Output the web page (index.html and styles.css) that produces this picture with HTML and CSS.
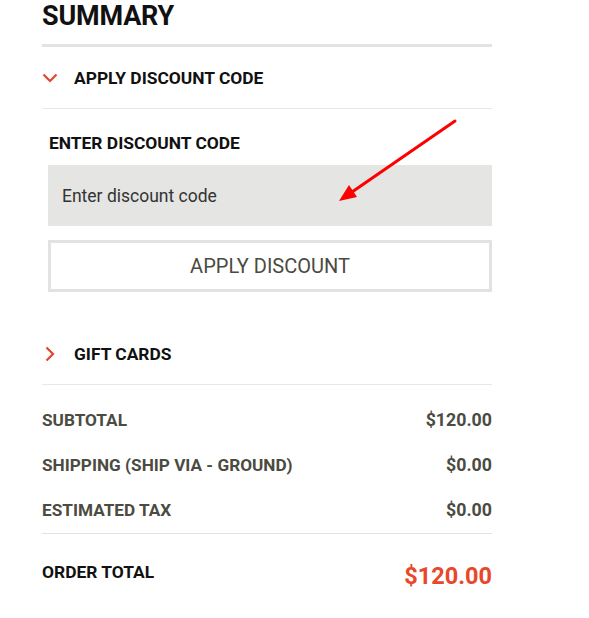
FILE: index.html
```html
<!DOCTYPE html>
<html>
<head>
<meta charset="utf-8">
<link rel="stylesheet" href="styles.css">
</head>
<body>
<div class="summary">
  <h1 class="title">SUMMARY</h1>
  <div class="acc-head open">
    <svg class="chev" width="16" height="10" viewBox="0 0 16 10"><path d="M1.5 1.5 L8 8 L14.5 1.5" fill="none" stroke="#e0472b" stroke-width="2.2"/></svg>
    <span>APPLY DISCOUNT CODE</span>
  </div>
  <div class="discount">
    <label class="label">ENTER DISCOUNT CODE</label>
    <div class="input">Enter discount code</div>
    <button class="btn">APPLY DISCOUNT</button>
  </div>
  <div class="acc-head gift">
    <svg class="chev" width="16" height="16" viewBox="0 0 16 16"><path d="M4.5 1.5 L11 8 L4.5 14.5" fill="none" stroke="#e0472b" stroke-width="2.2"/></svg>
    <span>GIFT CARDS</span>
  </div>
  <div class="totals">
    <div class="row"><span>SUBTOTAL</span><span>$120.00</span></div>
    <div class="row"><span>SHIPPING (SHIP VIA - GROUND)</span><span>$0.00</span></div>
    <div class="row"><span>ESTIMATED TAX</span><span>$0.00</span></div>
  </div>
  <div class="grand">
    <span class="g-label">ORDER TOTAL</span>
    <span class="g-value">$120.00</span>
  </div>
</div>
<svg class="arrow" width="589" height="618" viewBox="0 0 589 618">
  <line x1="455" y1="121" x2="352" y2="192" stroke="#f00" stroke-width="3" stroke-linecap="round"/>
  <polygon points="339,201 349,185 357,197" fill="#f00"/>
</svg>
</body>
</html>
```
FILE: styles.css
```css
html, body { margin: 0; padding: 0; background: #fff; }
body { font-family: Roboto, "Liberation Sans", sans-serif; position: relative; }
.summary { width: 450px; margin-left: 42px; }
.title { margin: 0; font-size: 27px; font-weight: 700; line-height: 32px; color: #111; height: 44px; letter-spacing: -0.2px; }
.acc-head { display: flex; align-items: center; height: 61px; border-top: 3px solid #e3e3e3; border-bottom: 1px solid #e8e8e8; font-weight: 700; font-size: 17.4px; color: #111; }
.acc-head .chev { width: 16px; margin-right: 16px; }
.acc-head.gift { border-top: none; height: 61px; padding-top: 31px; }
.discount { padding: 0 0 0 6px; }
.label { display: block; font-weight: 700; font-size: 17.4px; color: #111; padding-top: 24px; line-height: 20px; height: 32px; padding-left: 1px; }
.input { height: 61px; background: #e5e5e3; display: flex; align-items: center; padding-left: 14px; font-size: 17.5px; color: #333; }
.btn { display: block; width: 100%; height: 52px; margin-top: 14px; background: #fff; border: 3px solid #e2e2e2; font-family: Roboto, "Liberation Sans", sans-serif; font-size: 20px; color: #4a4a42; padding: 0; }
.totals { border-bottom: 1px solid #e3e3e3; padding: 12px 0 1px; }
.row { display: flex; justify-content: space-between; height: 45px; align-items: center; font-weight: 700; font-size: 17.2px; color: #4b4b42; }
.row span:last-child { font-size: 17.8px; }
.grand { display: flex; justify-content: space-between; align-items: center; height: 84px; }
.g-label { font-weight: 700; font-size: 17.4px; color: #111; margin-top: -8px; }
.g-value { font-weight: 700; font-size: 23.5px; color: #e8472a; }
.arrow { position: absolute; left: 0; top: 0; pointer-events: none; }
```
